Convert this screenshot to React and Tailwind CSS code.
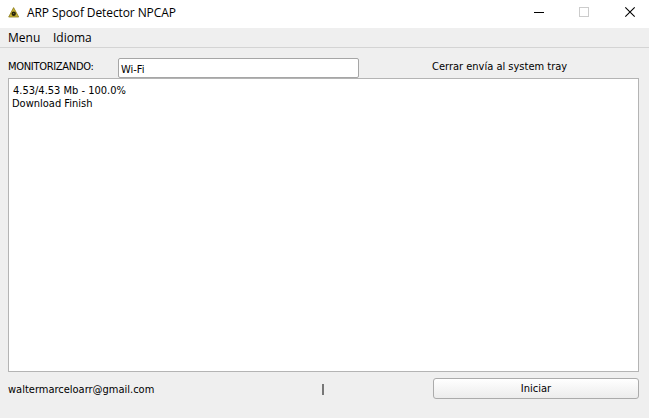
const tahoma = "font-['DejaVu_Sans_Condensed','DejaVu_Sans',sans-serif] font-stretch-condensed text-[11px] leading-[13px] whitespace-nowrap";

function AppIcon() {
  return (
    <svg width="12" height="12" viewBox="0 0 12 12" className="mt-[7px] ml-2 shrink-0">
      <path d="M5.6 0.6 L10.7 10 H0.7 Z" fill="#c9b535" stroke="#8c7b1c" strokeWidth="0.8" strokeLinejoin="round" />
      <circle cx="5.7" cy="6.7" r="2.2" fill="#25220c" />
      <circle cx="5.7" cy="6.5" r="0.6" fill="#9c8b2c" />
    </svg>
  );
}

function TitleBar() {
  return (
    <header className="flex h-7 shrink-0 bg-white">
      <AppIcon />
      <h1 className="mt-[5px] ml-[7px] grow font-['Open_Sans',sans-serif] text-[12px] leading-4 tracking-[-0.1px] whitespace-nowrap">
        ARP Spoof Detector NPCAP
      </h1>
      <svg width="120" height="28" viewBox="0 0 120 28" fill="none" shapeRendering="crispEdges">
        <path d="M5 12.5H15" stroke="#000" />
        <rect x="50.5" y="7.5" width="9" height="9" stroke="#ccc" />
        <path d="M96.3 7.3L105.7 16.7M105.7 7.3L96.3 16.7" stroke="#000" strokeWidth="1.1" shapeRendering="auto" />
      </svg>
    </header>
  );
}

export default function App() {
  return (
    <div className="flex h-[418px] w-[649px] flex-col overflow-hidden bg-[#efefef] text-black">
      <TitleBar />
      <nav className="flex h-5 shrink-0 border-b border-[#d4d4d4] pl-2 font-['Open_Sans',sans-serif] text-[12px] leading-5">
        <span className="w-[45px]">Menu</span>
        <span>Idioma</span>
      </nav>
      <main className="flex grow flex-col pr-[10px] pl-2">
        <div className="flex h-[30px] items-end">
          <label className={`${tahoma} mb-[5px] w-[110px] tracking-[-0.3px]`}>MONITORIZANDO:</label>
          <div className="h-5 w-[241px] rounded-[2px] border border-[#a6a6a6] bg-white pt-[4px] pl-[2px]">
            <div className={tahoma}>Wi-Fi</div>
          </div>
          <span className={`${tahoma} mb-[5px] ml-[73px]`}>Cerrar envía al system tray</span>
        </div>
        <section className="h-[294px] border border-[#b4b4b4] bg-white pt-[5px] pl-[3px]">
          <p className={`${tahoma} pl-px`}>4.53/4.53 Mb - 100.0%</p>
          <p className={tahoma}>Download Finish</p>
        </section>
        <footer className="flex pt-[6px]">
          <span className={`${tahoma} mt-[5px] w-[314px]`}>waltermarceloarr@gmail.com</span>
          <span className="mt-[6px] h-[11px] w-[2px] bg-[#777]" />
          <button className={`${tahoma} ml-auto h-[21px] w-[206px] rounded-[3px] border border-[#ababab] bg-linear-to-b from-white to-[#ececec]`}>
            Iniciar
          </button>
        </footer>
      </main>
    </div>
  );
}
